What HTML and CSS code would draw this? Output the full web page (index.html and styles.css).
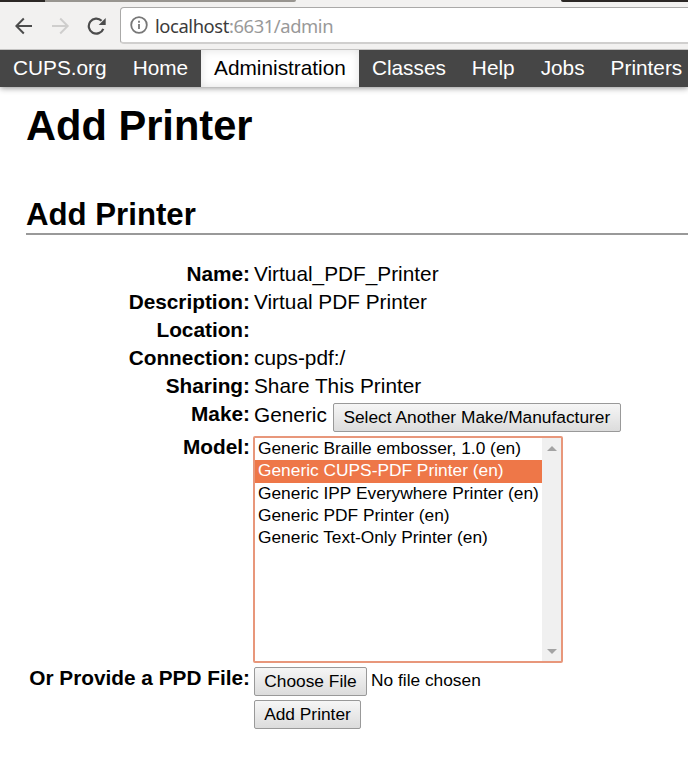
FILE: index.html
```html
<!DOCTYPE html>
<html lang="en">
<head>
<meta charset="utf-8">
<title>Add Printer</title>
<link rel="stylesheet" href="styles.css">
</head>
<body>
<header class="browser">
  <div class="tabs"><span class="tab-dark"></span><span class="tab-line"></span><span class="tab-gap"></span><span class="tab-end"></span></div>
  <div class="toolbar">
    <svg class="tool back" width="18" height="18" viewBox="0 0 18 18"><path d="M17 9H1.5M8.8 1.5 1.3 9l7.5 7.5"/></svg>
    <svg class="tool forward" width="18" height="18" viewBox="0 0 18 18"><path d="M0 9h15.5M8.2 1.5 15.7 9l-7.5 7.5"/></svg>
    <svg class="tool reload" width="20" height="18" viewBox="0 0 20 18"><path d="M16.3 11.8A7.5 7.5 0 1 1 14.6 3.8"/><path class="tip" d="M18.7 1v7h-7z"/></svg>
    <div class="address">
      <svg class="info" width="18" height="18" viewBox="0 0 18 18"><circle cx="9" cy="9" r="7.8"/><path d="M9 8v5M9 4.8v2"/></svg>
      <span class="url">localhost<span class="path">:6631/admin</span></span>
    </div>
  </div>
</header>
<nav class="menu">
  <a>CUPS.org</a><a>Home</a><a class="active">Administration</a><a>Classes</a><a>Help</a><a>Jobs</a><a>Printers</a>
</nav>
<main>
  <h1>Add Printer</h1>
  <h2>Add Printer</h2>
  <form class="fields">
    <b>Name:</b><span>Virtual_PDF_Printer</span>
    <b>Description:</b><span>Virtual PDF Printer</span>
    <b>Location:</b><span></span>
    <b>Connection:</b><span>cups-pdf:/</span>
    <b>Sharing:</b><span>Share This Printer</span>
    <b>Make:</b><div class="line make"><span>Generic</span><button type="button" class="wide">Select Another Make/Manufacturer</button></div>
    <b class="raised">Model:</b>
    <div class="list">
      <ul>
        <li>Generic Braille embosser, 1.0 (en)</li>
        <li class="selected">Generic CUPS-PDF Printer (en)</li>
        <li>Generic IPP Everywhere Printer (en)</li>
        <li>Generic PDF Printer (en)</li>
        <li>Generic Text-Only Printer (en)</li>
      </ul>
      <div class="scroll"><i class="up"></i><i class="down"></i></div>
    </div>
    <b class="raised">Or Provide a PPD File:</b><div class="line file"><button type="button" class="choose">Choose File</button><span>No file chosen</span></div>
    <b></b><div class="line"><button type="button" class="add">Add Printer</button></div>
  </form>
</main>
</body>
</html>
```
FILE: styles.css
```css
* { box-sizing: border-box; }
html { overflow: hidden; }
body {
  margin: 0;
  height: 770px;
  overflow: hidden;
  background: #fff;
  color: #000;
  font: 20.8px/24px "Liberation Sans", Arial, sans-serif;
}

/* Browser chrome */
.browser {
  position: relative;
  z-index: 1;
  height: 50px;
  background: #f2f1f0;
  border-bottom: 1px solid #c4c3c2;
}
.tabs { display: flex; height: 2px; }
.tab-dark { width: 45px; background: #2b2725; }
.tab-line { width: 251px; background: #989590; border-bottom-right-radius: 2px; }
.tab-gap { width: 265px; }
.tab-end { flex: 1; background: #2b2725; border-bottom-left-radius: 2px; }
.toolbar { display: flex; align-items: center; height: 47px; padding-left: 15px; }
.tool { flex: none; fill: none; stroke: #4c4c4c; stroke-width: 2; }
.forward { margin-left: 19px; stroke: #cfcecd; }
.reload { margin-left: 17px; }
.reload path { stroke-width: 2.2; }
.reload .tip { fill: #4c4c4c; stroke: none; }
.address {
  display: flex;
  align-items: center;
  width: 600px;
  height: 37px;
  flex: none;
  margin-left: 13px;
  padding-left: 9px;
  background: #fff;
  border: 1px solid #aaa9a8;
  border-bottom: 2px solid #d0cfce;
  border-radius: 4px;
}
.info { fill: none; stroke: #777; stroke-width: 1.8; }
.url { margin-left: 7px; padding-top: 1px; font: 18.4px/24px "Noto Sans", sans-serif; letter-spacing: -.42px; color: #3b3b3b; white-space: nowrap; }
.path { color: #999; }

/* Site menu */
.menu {
  display: flex;
  height: 37px;
  background: #464646;
  color: #fff;
  box-shadow: 0 1px 6px rgba(0, 0, 0, .45);
}
.menu a { flex: none; padding: 6px 13px 0; white-space: nowrap; }
.menu .active { background: #fff; color: #000; box-shadow: inset 0 0 10px rgba(0, 0, 0, .12); }

/* Page content */
main { padding-left: 26px; }
h1 { margin: 15px 0 0; font-size: 41.6px; line-height: 48px; }
h2 { margin: 47px 0 0; height: 38px; font-size: 31.2px; line-height: 36px; border-bottom: 2px solid #999; }
.fields {
  display: grid;
  grid-template-columns: 224px 1fr;
  grid-template-rows: repeat(5, 24px) 30px 227px 29px 29px;
  gap: 4px;
  margin: 27px 0 0;
}
.fields b { text-align: right; white-space: nowrap; }
.fields .raised { margin-top: -1px; }
.line { display: flex; align-items: flex-start; white-space: nowrap; }
.make { padding-top: 1px; }
button {
  height: 29px;
  padding: 0 0 2px;
  font: 17.33px/20px "Liberation Sans", Arial, sans-serif;
  color: #000;
  background: linear-gradient(#f6f6f6, #dcdcdc);
  border: 1px solid #999;
  border-radius: 2px;
  white-space: nowrap;
}
.wide { width: 288px; margin-left: 6px; }
.choose { width: 113px; }
.add { width: 107px; }
.file span { margin-left: 4px; padding-top: 1px; font-size: 17.33px; }
.list {
  display: flex;
  width: 310px;
  height: 227px;
  margin-left: -1px;
  background: #fff;
  border: 2px solid #e8977b;
  border-radius: 2px;
}
.list ul { flex: 1; margin: 0; padding: 0; list-style: none; font-size: 17.33px; }
.list li { height: 22.3px; padding-left: 3px; line-height: 21px; white-space: nowrap; }
.list .selected { background: #ee7748; color: #fff; }
.scroll {
  display: flex;
  flex-direction: column;
  justify-content: space-between;
  align-items: center;
  width: 19px;
  padding: 8px 0 7px;
  background: #f0f0f0;
}
.scroll i { border: 5px solid transparent; }
.scroll .up { border-top: 0; border-bottom-color: #a3a3a3; }
.scroll .down { border-bottom: 0; border-top-color: #a3a3a3; }
```
